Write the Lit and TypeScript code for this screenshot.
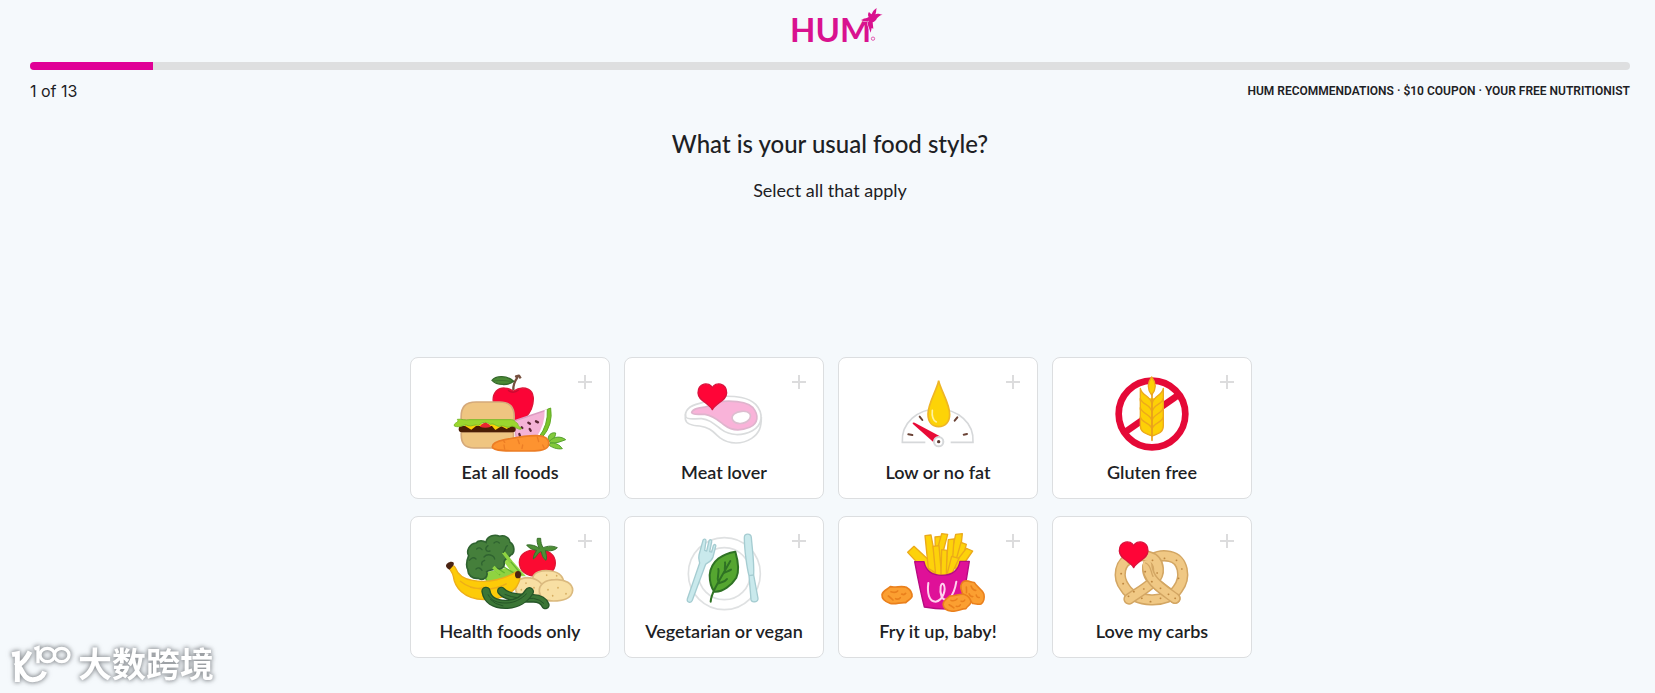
import { LitElement, html, svg, css, TemplateResult } from 'lit';
import { customElement, property } from 'lit/decorators.js';

interface Choice {
  id: string;
  label: string;
  viewBox: string;
  art: TemplateResult;
}

const heart = (x: number, y: number) => svg`
  <path transform="translate(${x} ${y})" fill="#ff0537" stroke="#d9123c" stroke-width="4" stroke-linejoin="round"
    d="M0 -26C-9 -44 -43 -42 -43 -10C-42 14 -12 18 0 40C12 18 42 14 43 -10C43 -42 9 -44 0 -26Z"/>`;

const allFoods = svg`
  <path d="M326 122C325 106 329 96 338 84L334 80L343 78L348 86" fill="none" stroke="#76503f" stroke-width="7" stroke-linejoin="round"/>
  <path d="M262 92C272 80 304 74 327 95C312 108 276 108 262 92Z" fill="#4b8a35" stroke="#34682a" stroke-width="4"/>
  <path d="M266 94C286 91 304 93 326 96" fill="none" stroke="#34682a" stroke-width="2"/>
  <path d="M326 125C310 112 288 112 275 124C262 138 264 160 272 180L330 218C352 216 371 200 380 178C389 155 389 128 372 119C356 112 338 116 326 125Z" fill="#fb0436" stroke="#de1538" stroke-width="4"/>
  <path d="M310 122Q326 134 342 121" fill="none" stroke="#c90b31" stroke-width="4"/>
  <path d="M328 214L426 181Q428 228 396 266L335 268Z" fill="#f4b3d6" stroke="#dc9bc1" stroke-width="4"/>
  <path d="M420 181L430 179Q434 228 404 262L394 264Q422 226 420 181Z" fill="#fff"/>
  <path d="M428 179L438 175Q446 226 412 264L402 263Q431 226 428 179Z" fill="#7cc42b" stroke="#5fa925" stroke-width="3"/>
  <g stroke="#5b2735" stroke-width="7" stroke-linecap="round"><path d="M371 219l5 3M394 215l6 3M351 233l2 2M375 238l3 5M344 253l2 6"/></g>
  <path d="M170 212C166 170 184 157 214 157H284C314 157 332 170 328 212Z" fill="#efc581" stroke="#d5a97a" stroke-width="5"/>
  <path d="M170 247H326C330 286 312 295 288 295H208C184 294 167 286 170 247Z" fill="#efc581" stroke="#d5a97a" stroke-width="5"/>
  <rect x="162" y="229" width="171" height="19" rx="9" fill="#4a1d04"/>
  <path d="M180 228L200 240L214 229H262L272 241L290 230L306 238L322 228V222H180Z" fill="#fdcf05"/>
  <path d="M149 229C146 218 166 219 158 209C170 207 180 213 196 210H316C330 209 332 218 339 222C338 231 352 234 350 238C340 242 327 226 319 230C306 238 300 226 289 229C276 234 268 218 258 224C247 216 232 216 222 227C210 222 202 232 190 228C179 220 169 237 149 229Z" fill="#9bd62e" stroke="#7dbd2b" stroke-width="3"/>
  <path d="M225 231Q242 208 259 231Q242 237 225 231Z" fill="#e8252f"/>
  <g fill="#82c93c" stroke="#55a02f" stroke-width="3"><path d="M430 268C432 250 446 248 453 250C453 262 445 270 435 277Z"/><path d="M434 275C450 258 470 260 483 270C468 276 452 282 438 280Z"/><path d="M436 281C450 277 466 286 473 297C456 300 440 292 432 286Z"/></g>
  <path d="M263 292C262 280 280 274 300 270C340 262 390 254 414 260C430 264 436 278 430 290C422 304 396 304 366 304C326 304 266 306 263 292Z" fill="#fd9330" stroke="#ec7d25" stroke-width="5"/>
  <path d="M298 286l2 12M340 270l4 12M352 296l2 -10M398 262l4 14M414 286l4 8M296 272l4 6" fill="none" stroke="#ec7d25" stroke-width="4" stroke-linecap="round"/>`;

const meat = svg`
  <path d="M197 194V208C199 224 216 228 240 229C270 233 280 246 300 264C330 286 368 284 396 266C420 250 425 232 425 202" fill="#fff" stroke="#dadcdd" stroke-width="5"/>
  <path d="M199 202C193 184 208 168 240 161C262 156 270 141 305 140C350 139 386 142 408 164C432 190 430 226 398 243C366 260 330 258 306 240C284 224 272 210 246 207C226 206 204 212 199 202Z" fill="#fff" stroke="#dadcdd" stroke-width="5"/>
  <path d="M216 188C220 176 240 174 256 172C278 168 284 156 310 155C350 153 382 156 400 174C418 196 416 222 390 233C362 244 334 242 314 226C296 212 282 198 256 194C240 193 218 198 216 188Z" fill="#f9b3d9" stroke="#dfb4cd" stroke-width="5"/>
  <path d="M339 211C332 196 350 186 366 185C390 183 398 196 388 210C376 224 348 226 339 211Z" fill="#fff" stroke="#dcbdcf" stroke-width="5"/>
  ${heart(278, 140)}`;

const lowFat = svg`
  <path d="M281 278H212C208 220 258 178 318 178C378 178 428 220 424 278H357" fill="#fff" stroke="#d6d8da" stroke-width="5"/>
  <path d="M230 254l12 2M264 201l8 10M377 203l-8 10M406 253l-10 2" stroke="#6b4336" stroke-width="6" stroke-linecap="round"/>
  <path d="M321 93C326 120 354 160 354 194C354 218 340 231 321 231C302 231 289 218 289 194C289 160 316 120 321 93Z" fill="#fdd307" stroke="#eeb526" stroke-width="5"/>
  <path d="M302 182C300 200 304 212 314 217" fill="none" stroke="#fff2a0" stroke-width="5" stroke-linecap="round"/>
  <path d="M243 222Q242 217 249 219L325 260L309 281Z" fill="#e80a36"/>
  <circle cx="321" cy="276" r="14" fill="#fff" stroke="#d6d8da" stroke-width="6"/>
  <circle cx="321" cy="276" r="5" fill="#5b3a32"/>`;

const gluten = svg`
  <circle cx="319" cy="193" r="100" fill="none" stroke="#e50937" stroke-width="20"/>
  <path d="M240 246L397 137" stroke="#e50937" stroke-width="20"/>
  <path d="M286 146H350V235Q344 252 319 258Q292 252 284 235Z" fill="#fdd006"/>
  <g fill="#fdd006" stroke="#eda91c" stroke-width="4" stroke-linejoin="round">
    <path d="M284 116C288 140 318 138 319 165V180C300 172 284 168 284 152Z"/><path d="M353 116C349 140 320 138 319 165V180C338 172 353 168 353 152Z"/>
    <path d="M284 146C288 166 318 164 319 190V206C300 198 284 194 284 178Z"/><path d="M353 146C349 166 320 164 319 190V206C338 198 353 194 353 178Z"/>
    <path d="M284 174C288 194 318 192 319 216V232C300 224 284 222 284 204Z"/><path d="M353 174C349 194 320 192 319 216V232C338 224 353 222 353 204Z"/>
    <path d="M284 202C288 220 318 220 319 240V259C300 252 284 248 284 228Z"/><path d="M353 202C349 220 320 220 319 240V259C338 252 353 248 353 228Z"/>
    <path d="M318 82C305 100 304 118 318 136C333 118 332 100 318 82Z"/>
  </g>
  <path d="M319 134V272" stroke="#e9a11b" stroke-width="5" stroke-linecap="round"/>`;

const health = svg`
  <path d="M300 128L364 200L330 200L290 146Z" fill="#9bdc4a"/>
  <path d="M232 190L300 176L345 190L330 214H244Z" fill="#8fd341"/>
  <path d="M296 130L352 196M298 172L330 192M266 176L286 196" stroke="#63b42e" stroke-width="4"/>
  <path d="M246 212C240 196 244 188 232 184M300 190L282 178" fill="none" stroke="#63b42e" stroke-width="4"/>
  <path d="M192 138C184 124 194 102 214 100C222 90 238 94 244 98C246 80 270 72 284 80C300 74 316 86 316 98C330 106 332 130 318 136C312 146 298 146 298 158C302 172 288 182 276 176C266 182 254 180 246 186C252 204 234 214 220 206C204 208 188 196 190 180C182 168 188 148 192 138Z" fill="#457f3b" stroke="#2f6330" stroke-width="5"/>
  <path d="M296 128L318 156M266 172L286 192" stroke="#8fd341" stroke-width="10"/>
  <path d="M214 148C206 140 200 146 194 152M238 142C248 130 268 136 270 148M250 108C238 116 244 128 256 124M296 128C304 122 300 112 308 108M268 100q8 -8 16 0M216 118q8 -8 16 2M214 178q10 -8 18 4M240 152q-12 4 -8 14" fill="none" stroke="#2f6330" stroke-width="4" stroke-linecap="round"/>
  <path d="M344 158C344 130 370 120 398 120C430 118 452 136 452 160C452 186 430 200 398 200C364 200 344 184 344 158Z" fill="#fb0b32" stroke="#dc1834" stroke-width="4"/>
  <path d="M404 116C398 104 396 94 398 86L408 86C408 98 410 106 416 114C430 108 444 108 458 114C452 122 434 126 422 122C424 134 428 142 424 152C414 146 412 136 410 126C400 126 398 140 386 148C386 136 392 128 396 122C384 120 372 116 366 106C380 104 394 108 404 116Z" fill="#4d8f35" stroke="#386f2b" stroke-width="3"/>
  <g fill="#f8dfa3" stroke="#dbba7f" stroke-width="5"><path d="M384 206C386 186 412 180 440 184C466 188 478 204 476 220L400 236Z"/><path d="M334 244C330 220 340 206 366 204C392 204 416 218 416 240C414 258 390 262 370 262C350 262 338 260 334 244Z"/><path d="M404 246C402 226 420 210 452 210C482 208 504 222 504 242C502 266 474 274 446 274C420 274 406 266 404 246Z"/></g>
  <path d="M364 220v1M350 240v1M388 234v1M372 248v1M430 240v1M460 234v1M484 252v1M444 258v1M456 198v1M426 196v1" stroke="#d5ac5f" stroke-width="5" stroke-linecap="round"/>
  <path d="M135 178C130 170 148 164 152 174C160 196 176 208 204 212C252 222 304 206 336 186L346 204C342 240 300 272 238 270C176 268 150 232 146 200C144 190 140 186 135 178Z" fill="#fdcb08" stroke="#edae19" stroke-width="4"/>
  <path d="M166 214C200 242 260 248 306 222M196 232C216 238 226 238 238 232" fill="none" stroke="#edae19" stroke-width="4"/>
  <path d="M124 170C122 160 140 152 146 158C150 164 146 170 134 180Q126 178 124 170Z" fill="#4b2413"/><ellipse cx="340" cy="195" rx="9" ry="11" fill="#4b2413"/>
  <path d="M290 244C306 264 350 266 386 266C406 266 418 276 422 286" fill="none" stroke="#265628" stroke-width="26" stroke-linecap="round"/>
  <path d="M290 244C306 264 350 266 386 266C406 266 418 276 422 286" fill="none" stroke="#3b7636" stroke-width="18" stroke-linecap="round"/>
  <path d="M300 254Q340 270 386 266Q408 270 418 282" fill="none" stroke="#265628" stroke-width="3"/>
  <path d="M244 245C248 270 268 284 302 284C338 284 362 266 374 246" fill="none" stroke="#265628" stroke-width="28" stroke-linecap="round"/>
  <path d="M244 245C248 270 268 284 302 284C338 284 362 266 374 246" fill="none" stroke="#3b7636" stroke-width="20" stroke-linecap="round"/>
  <path d="M250 254C260 274 278 280 304 280C330 280 350 268 366 252M256 268Q270 284 296 289" fill="none" stroke="#265628" stroke-width="3"/>`;

const vegan = svg`
  <circle cx="314" cy="192" r="108" fill="#fff" stroke="#dfe1e2" stroke-width="5"/>
  <circle cx="314" cy="192" r="78" fill="#fff" stroke="#dfe1e2" stroke-width="5"/>
  <g fill="#c9e9ec" stroke="#a5ccd1" stroke-width="4" stroke-linejoin="round">
    <path d="M250 92C252 86 260 88 259 94L255 122L261 124L268 94C270 88 278 90 276 97L270 126L276 127L281 108C284 102 290 105 288 111L280 142C276 156 264 158 258 164L218 272C214 282 200 278 203 268L240 160C238 150 236 146 238 136Z"/>
    <path d="M374 84C374 70 394 70 395 84C398 120 404 160 402 196L415 266C416 278 396 280 394 270L388 198C382 176 374 120 374 84Z"/><path d="M388 198L402 196"/>
  </g>
  <path d="M347 126C310 132 274 152 270 196C270 218 276 236 284 246C310 248 336 226 350 204C360 182 354 150 347 126Z" fill="#55a630" stroke="#2f7224" stroke-width="6" stroke-linejoin="round"/>
  <path d="M273 276C275 250 292 224 332 154M312 190C320 186 328 184 334 180M316 184C314 174 318 164 316 158M294 222C304 216 316 218 322 208M296 216C290 204 300 190 296 178" fill="none" stroke="#2f7224" stroke-width="6" stroke-linecap="round"/>`;

const nugget = (x: number, y: number, turn: number, scale = 1) => svg`
  <g transform="translate(${x} ${y}) rotate(${turn}) scale(${scale})" stroke="#ea801d" stroke-width="5" stroke-linejoin="round" stroke-linecap="round">
    <path fill="#fb9f31" d="M-45 -2C-42 -16 -28 -18 -20 -26C-4 -22 14 -30 28 -24C38 -18 46 -10 45 4C40 14 32 14 26 22C10 20 -4 28 -20 24C-34 20 -46 14 -45 -2Z"/>
    <path fill="none" d="M-18 -11Q-4 -6 2 -13M14 -4Q22 0 26 -6M-26 2Q-18 8 -12 14M-4 10Q6 14 10 7"/>
  </g>`;

const fries = svg`
  <g fill="#fdd20a" stroke="#eba91a" stroke-width="4" stroke-linejoin="round">
    <path d="M310 82L326 80L336 160H312Z"/><path d="M372 74L392 72L388 110L370 176H350Z"/>
    <path d="M330 72L348 74L336 120L318 180L306 160Z"/><path d="M388 98L404 104L390 156L366 176Z"/>
    <path d="M350 90L367 88L360 190H342Z"/><path d="M404 116L423 124L398 160L374 184L370 160Z"/>
    <path d="M228 128L247 110L292 152L312 196L284 180L256 158Z"/><path d="M280 78L298 76L312 150L318 194L290 176Z"/>
    <path d="M304 110L322 108L330 200L312 194Z"/><path d="M330 120L346 122L344 196H328Z"/><path d="M360 140L382 146L362 190L346 194Z"/>
  </g>
  <path d="M249 156H277C282 182 300 197 330 197C362 197 380 182 385 155H413L390 296Q330 302 278 292Q266 246 249 156Z" fill="#df1098" stroke="#b60b80" stroke-width="4" stroke-linejoin="round"/>
  <path d="M290 220C286 250 292 276 312 276C334 272 344 240 336 224C328 216 322 238 330 262C342 282 366 266 374 216" fill="none" stroke="#ffd2ee" stroke-width="6" stroke-linecap="round"/>
  ${nugget(196, 257, 0)}
  ${nugget(422, 249, 48, 0.95)}
  ${nugget(376, 280, -8, 0.93)}`;

const pretzelRope = 'M900 148C930 130 976 136 980 176C984 212 948 230 892 268';
const pretzelBack = 'M902 146C862 152 856 204 880 234C906 280 1010 284 1038 238C1064 204 1056 148 1014 140C976 132 946 152 948 180C950 216 996 236 1030 266';
const carbs = svg`
  <g fill="none" stroke-linecap="round" stroke-linejoin="round">
    <path d="${pretzelBack}" stroke="#d3a663" stroke-width="34"/><path d="${pretzelBack}" stroke="#f0c884" stroke-width="25"/>
    <path d="${pretzelRope}" stroke="#d3a663" stroke-width="34"/><path d="${pretzelRope}" stroke="#f0c884" stroke-width="25"/>
    <path d="M948 172C950 212 986 234 1030 266" stroke="#d3a663" stroke-width="34"/><path d="M946 164C948 212 986 234 1030 266" stroke="#f0c884" stroke-width="25"/>
    <path d="M942 160C960 168 956 186 964 200" stroke="#d3a663" stroke-width="4"/>
    <path d="M868 192h1M874 222h1M906 246h1M930 266h1M956 276h1M986 266h1M1010 254h1M1040 206h1M1050 178h1M1034 152h1M998 146h1M976 190h1M962 152h1M940 186h1M960 216h1M936 238h1M890 260h1M986 236h1M1030 266h1" stroke="#bd8741" stroke-width="5"/>
  </g>
  ${heart(906, 134)}`;

const CHOICES: Choice[] = [
  { id: 'all', label: 'Eat all foods', viewBox: '106 70 420 240', art: allFoods },
  { id: 'meat', label: 'Meat lover', viewBox: '103 70 420 240', art: meat },
  { id: 'low-fat', label: 'Low or no fat', viewBox: '109 70 420 240', art: lowFat },
  { id: 'gluten-free', label: 'Gluten free', viewBox: '109 70 420 240', art: gluten },
  { id: 'health', label: 'Health foods only', viewBox: '106 67 420 240', art: health },
  { id: 'vegan', label: 'Vegetarian or vegan', viewBox: '103 67 420 240', art: vegan },
  { id: 'fried', label: 'Fry it up, baby!', viewBox: '109 67 420 240', art: fries },
  { id: 'carbs', label: 'Love my carbs', viewBox: '751 67 420 240', art: carbs },
];

@customElement('food-choice')
class FoodChoice extends LitElement {
  @property({ attribute: false }) choice!: Choice;

  static styles = css`
    :host { display: block; }
    .card {
      position: relative;
      display: flex;
      flex-direction: column;
      align-items: center;
      box-sizing: border-box;
      min-height: 142px;
      padding: 15px 4px 14px;
      border: 1px solid #dcdee0;
      border-radius: 8px;
      background: #fff;
      cursor: pointer;
    }
    .card:focus-within { border-color: #e10098; }
    .tick {
      appearance: none;
      position: absolute;
      top: 17px;
      right: 17px;
      width: 14px;
      height: 14px;
      margin: 0;
      outline: none;
      background:
        linear-gradient(#dcdcdd, #dcdcdd) center / 14px 2px no-repeat,
        linear-gradient(#dcdcdd, #dcdcdd) center / 2px 14px no-repeat;
    }
    .tick:checked { transform: rotate(45deg); }
    .art { width: 140px; height: 80px; }
    .name {
      margin-top: 7px;
      font: 600 18px/24px Lato, sans-serif;
      color: #1d2124;
      text-align: center;
    }
  `;

  render() {
    return html`
      <label class="card">
        <input class="tick" type="checkbox" name="food-style" value=${this.choice.id}>
        <svg class="art" viewBox=${this.choice.viewBox} aria-hidden="true">${this.choice.art}</svg>
        <span class="name">${this.choice.label}</span>
      </label>`;
  }
}

@customElement('app-root')
class AppRoot extends LitElement {
  @property({ type: Number }) step = 1;
  @property({ type: Number }) steps = 13;

  static styles = css`
    :host {
      display: block;
      position: relative;
      box-sizing: border-box;
      min-height: 100vh;
      padding: 0 25px 24px 30px;
      background: #f5f9fc;
      color: #1d2124;
      font-family: Lato, sans-serif;
    }
    .top { display: flex; justify-content: center; height: 62px; }
    .logo {
      display: flex;
      align-items: flex-start;
      width: 94px;
      height: 44px;
      margin-left: 14px;
      color: #d9128f;
      text-decoration: none;
    }
    .word { padding-top: 9px; font-size: 33px; line-height: 40px; font-weight: 700; }
    .bird { flex: none; width: 24px; height: 36px; margin: 8px 0 0 -12px; }
    .track { height: 8px; border-radius: 4px; background: #dedfe0; overflow: hidden; }
    .fill { height: 100%; background: #e00096; }
    .status { display: flex; justify-content: space-between; margin-top: 9px; line-height: 24px; }
    .count { font-family: Inter, sans-serif; font-size: 16px; }
    .perks { font-family: Roboto, sans-serif; font-size: 12px; font-weight: 600; }
    .title { margin: 25px 0 0; font-size: 24px; line-height: 32px; font-weight: 500; text-align: center; }
    .hint { margin: 18px 0 0; font-size: 18px; line-height: 24px; text-align: center; }
    .choices {
      display: grid;
      grid-template-columns: repeat(auto-fit, 200px);
      justify-content: center;
      gap: 17px 14px;
      max-width: 856px;
      margin: 155px auto 0;
      padding-left: 2px;
    }
    .mark {
      position: absolute;
      left: 10px;
      bottom: 6px;
      display: flex;
      align-items: center;
      gap: 7px;
      color: #fff;
      font: 700 34px/48px "Noto Sans CJK SC", sans-serif;
      filter: drop-shadow(0 0 2px #8c9094) drop-shadow(0 0 2px #b4b8bc);
    }
    .mark-icon { width: 61px; height: 44px; }
  `;

  render() {
    return html`
      <header class="top">
        <a class="logo" href="#" aria-label="HUM">
          <span class="word">HUM</span>
          <svg class="bird" viewBox="0 0 72 108" aria-hidden="true">
            <path fill="#d9128f" stroke="#f5f9fc" stroke-width="3" paint-order="stroke" d="M6 36C14 33 22 31 29 27C26 22 27 16 30 12C33 16 36 17 38 19C41 10 46 4 53 0C51 7 52 14 49 19C55 15 60 18 71 20C62 22 58 26 54 31C51 38 47 41 41 43L43 62L38 60L35 74L27 52C25 46 27 42 30 38C22 40 14 41 6 36Z"/>
            <circle cx="42" cy="92" r="5" fill="none" stroke="#d9128f" stroke-width="2"/>
          </svg>
        </a>
      </header>
      <main>
        <div class="track" role="progressbar" aria-label="Quiz progress" aria-valuemin="0" aria-valuemax=${this.steps} aria-valuenow=${this.step}>
          <div class="fill" style="width:${(this.step / this.steps) * 100}%"></div>
        </div>
        <div class="status">
          <span class="count">${this.step} of ${this.steps}</span>
          <span class="perks">HUM RECOMMENDATIONS · $10 COUPON · YOUR FREE NUTRITIONIST</span>
        </div>
        <h1 class="title">What is your usual food style?</h1>
        <p class="hint" id="hint">Select all that apply</p>
        <div class="choices" role="group" aria-labelledby="hint">
          ${CHOICES.map((c) => html`<food-choice .choice=${c}></food-choice>`)}
        </div>
      </main>
      <div class="mark">
        <svg class="mark-icon" viewBox="30 30 183 132" aria-hidden="true">
          <g fill="none" stroke="#fff" stroke-width="15">
            <path d="M36 71L52 68V153"/>
            <path d="M90 62C80 82 66 98 54 102C66 116 70 145 98 146C116 146 128 138 134 122"/>
            <g stroke-width="10">
              <path d="M103 54L114 50V97"/>
              <ellipse cx="142" cy="72" rx="22" ry="20"/>
              <ellipse cx="185" cy="72" rx="22" ry="20"/>
            </g>
          </g>
        </svg>
        <span>大数跨境</span>
      </div>`;
  }
}
